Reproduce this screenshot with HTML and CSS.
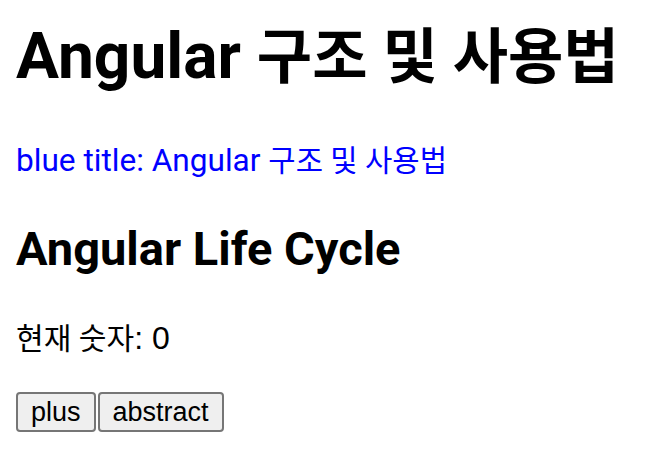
FILE: index.html
```html
<!DOCTYPE html>
<html lang="ko">
<head>
<meta charset="utf-8">
<title>Angular 구조 및 사용법</title>
<link rel="stylesheet" href="styles.css">
</head>
<body>
<h1 class="title">Angular <span class="ko">구조 및 사용법</span></h1>
<p class="blue">blue title: Angular <span class="ko">구조 및 사용법</span></p>
<h2 class="subtitle">Angular Life Cycle</h2>
<p class="count"><span class="ko">현재 숫자</span>: 0</p>
<div class="actions"><button class="btn">plus</button><button class="btn">abstract</button></div>
</body>
</html>
```

FILE: styles.css
```css
html, body {
  background: #ffffff;
}
body {
  margin: 0;
  padding: 0 16px;
  font-family: Roboto, "Noto Sans CJK KR", sans-serif;
  color: #000000;
}
.title {
  font-size: 64px;
  font-weight: 700;
  line-height: 76px;
  margin: 19px 0 0;
}
.ko {
  font-family: Roboto, "Noto Sans CJK KR", sans-serif;
  font-size: 0.94em;
}
.blue {
  font-size: 31.6px;
  line-height: 40px;
  margin: 45px 0 0;
  color: #0000ff;
}
.subtitle {
  font-size: 47px;
  font-weight: 700;
  line-height: 56px;
  margin: 40px 0 0;
}
.count {
  font-family: "Liberation Sans", "Noto Sans CJK KR", sans-serif;
  font-size: 32px;
  line-height: 40px;
  margin: 41px 0 0;
}
.actions {
  display: flex;
  gap: 2px;
  margin-top: 33px;
}
.btn {
  font-family: "Liberation Sans", Arial, sans-serif;
  font-size: 27px;
  line-height: 34px;
  padding: 1px 13px;
  border: 2px solid #767676;
  border-radius: 4px;
  background: #efefef;
  color: #000000;
}
```
